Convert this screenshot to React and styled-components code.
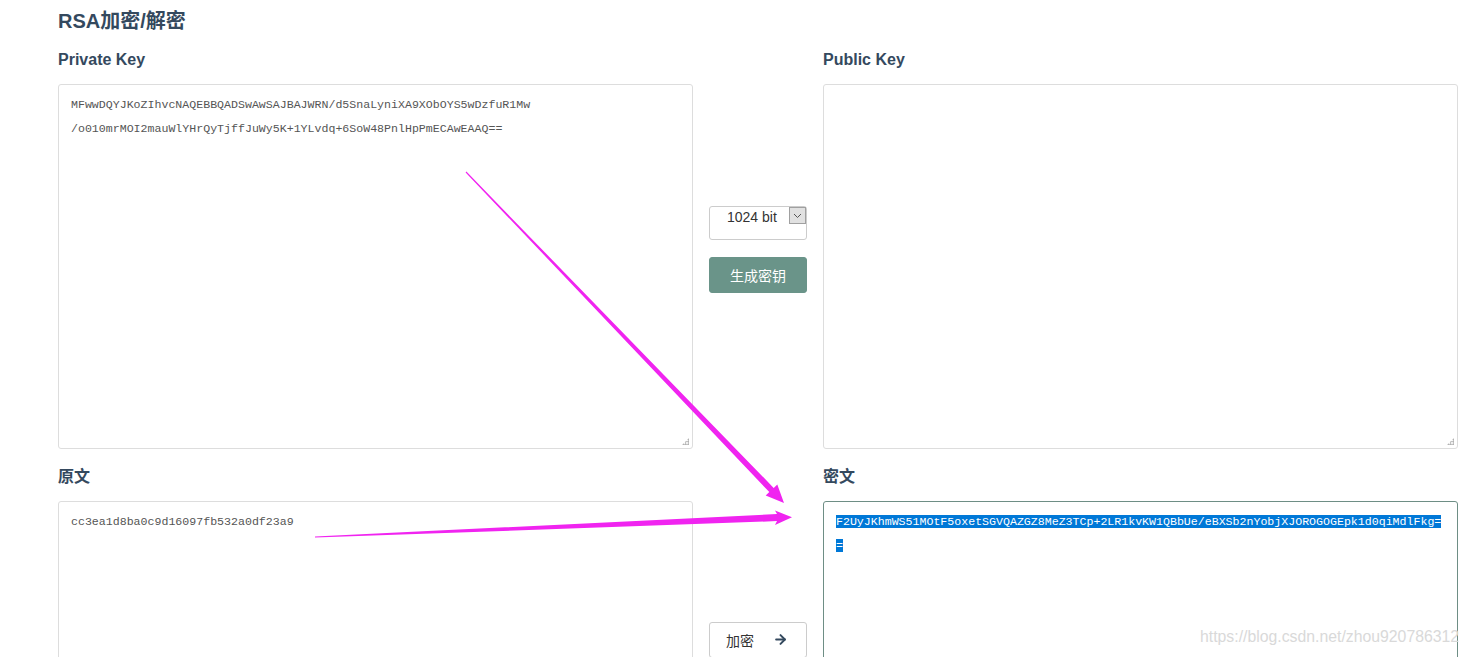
import React from "react";
import styled, { createGlobalStyle } from "styled-components";
import { ArrowRight } from "lucide-react";

const GlobalStyle = createGlobalStyle`
  html, body {
    margin: 0;
    padding: 0;
    overflow: hidden;
    background: #fff;
  }
  body {
    font-family: "Liberation Sans", Arial, "Noto Sans CJK SC", sans-serif;
    color: #333;
  }
`;

const Page = styled.div`
  position: relative;
  padding: 10px 0 0 58px;
  width: 1470px;
  height: 657px;
  box-sizing: border-box;
`;

const Title = styled.h2`
  margin: 0 0 18px;
  font-size: 20px;
  line-height: 22px;
  font-weight: bold;
  color: #34495e;
`;

const Row = styled.div`
  display: grid;
  grid-template-columns: 635px 98px 635px;
  column-gap: 16px;
  margin-bottom: 18px;
`;

const Col = styled.div`
  display: flex;
  flex-direction: column;
`;

const Label = styled.div`
  font-size: 16px;
  line-height: 20px;
  font-weight: bold;
  color: #34495e;
  margin-bottom: 14px;
`;

const Box = styled.div`
  position: relative;
  height: ${(p) => p.$h}px;
  box-sizing: border-box;
  border: 1px solid ${(p) => (p.$focus ? "#6e8e85" : "#ddd")};
  border-radius: 3px;
  padding: 8px 12px;
  font-family: "Liberation Mono", "Courier New", monospace;
  font-size: 11.6px;
  line-height: 24px;
  color: #555;
  word-break: break-all;
  white-space: pre-wrap;
`;

const Selected = styled.span`
  background: #0078d7;
  color: #fff;
`;

const Grip = styled.span`
  position: absolute;
  right: 3px;
  bottom: 3px;
  width: 7px;
  height: 7px;
  background-image: radial-gradient(circle, #aaa 0.9px, transparent 1px);
  background-size: 2.5px 2.5px;
  clip-path: polygon(100% 0, 100% 100%, 0 100%);
`;

const Middle = styled.div`
  display: flex;
  flex-direction: column;
  justify-content: center;
  gap: 17px;
`;

const Select = styled.div`
  position: relative;
  height: 34px;
  box-sizing: border-box;
  border: 1px solid #ccc;
  border-radius: 3px;
  font-size: 14px;
  line-height: 18px;
  padding-top: 1px;
  padding-left: 17px;
  color: #333;
`;

const SelectArrow = styled.span`
  position: absolute;
  top: 0;
  right: 0;
  width: 17px;
  height: 17px;
  box-sizing: border-box;
  background: #e1e1e1;
  border: 1px solid #a0a0a0;
  display: flex;
  align-items: center;
  justify-content: center;
`;

const Button = styled.div`
  height: 36px;
  box-sizing: border-box;
  border-radius: 3px;
  border: 1px solid ${(p) => (p.$primary ? "#6a9489" : "#ccc")};
  background: ${(p) => (p.$primary ? "#6a9489" : "#fff")};
  color: ${(p) => (p.$primary ? "#fff" : "#333")};
  font-size: 14px;
  display: flex;
  align-items: center;
  justify-content: ${(p) => (p.$primary ? "center" : "flex-start")};
  padding: 0 16px;
  gap: 19px;
`;

const Overlay = styled.svg`
  position: absolute;
  left: 0;
  top: 0;
  pointer-events: none;
`;

const Watermark = styled.div`
  position: absolute;
  left: 1200px;
  top: 628px;
  font-size: 15.8px;
  color: #d9d9d9;
  font-family: "Liberation Sans", Arial, sans-serif;
`;

const privateKey =
  "MFwwDQYJKoZIhvcNAQEBBQADSwAwSAJBAJWRN/d5SnaLyniXA9XObOYS5wDzfuR1Mw\n/o010mrMOI2mauWlYHrQyTjffJuWy5K+1YLvdq+6SoW48PnlHpPmECAwEAAQ==";
const cipher1 =
  "F2UyJKhmWS51MOtF5oxetSGVQAZGZ8MeZ3TCp+2LR1kvKW1QBbUe/eBXSb2nYobjXJOROGOGEpk1d0qiMdlFkg=";

export default function App() {
  return (
    <>
      <GlobalStyle />
      <Page>
        <Title>RSA加密/解密</Title>
        <Row>
          <Col>
            <Label>Private Key</Label>
            <Box $h={365}>
              {privateKey}
              <Grip />
            </Box>
          </Col>
          <Middle>
            <Select>
              1024 bit
              <SelectArrow>
                <svg width="9" height="6" viewBox="0 0 9 6">
                  <path d="M1 1l3.5 3.5L8 1" fill="none" stroke="#555" strokeWidth="1" />
                </svg>
              </SelectArrow>
            </Select>
            <Button $primary>生成密钥</Button>
          </Middle>
          <Col>
            <Label>Public Key</Label>
            <Box $h={365}>
              <Grip />
            </Box>
          </Col>
        </Row>
        <Row>
          <Col>
            <Label>原文</Label>
            <Box $h={311}>cc3ea1d8ba0c9d16097fb532a0df23a9</Box>
          </Col>
          <Middle>
            <Button>
              加密
              <ArrowRight size={15} strokeWidth={3.2} color="#34495e" />
            </Button>
          </Middle>
          <Col>
            <Label>密文</Label>
            <Box $h={311} $focus>
              <Selected>{cipher1}</Selected>
              {"\n"}
              <Selected>=</Selected>
            </Box>
          </Col>
        </Row>
        <Overlay width="1470" height="657" viewBox="0 0 1470 657">
          <polygon
            fill="#f024f0"
            points="465.6,172.4 769.3,492.1 765.7,495.6 784,503 777.3,484.4 773.7,487.9 466.4,171.6"
          />
          <polygon
            fill="#f024f0"
            points="315,536.6 777,514.1 775,510.4 792,517.3 775,525 777,521.1 315,537.6"
          />
        </Overlay>
        <Watermark>https://blog.csdn.net/zhou920786312</Watermark>
      </Page>
    </>
  );
}
